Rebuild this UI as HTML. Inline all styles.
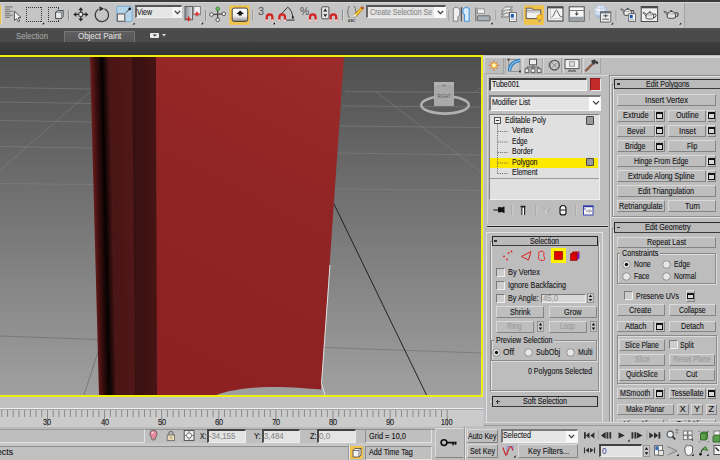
<!DOCTYPE html>
<html><head><meta charset="utf-8"><style>
html,body{margin:0;padding:0;}
body{width:720px;height:460px;overflow:hidden;position:relative;background:#bdbdbd;font-family:"Liberation Sans",sans-serif;}
body>div, .a{position:absolute;box-sizing:border-box;}
.t{position:absolute;white-space:pre;-webkit-text-stroke:0.12px currentColor;}
svg{position:absolute;}
</style></head><body>
<div style="left:0px;top:0px;width:720px;height:2px;background:#3b3b3b"></div>
<div style="left:0px;top:2px;width:720px;height:26px;background:#c5c5c5;border-top:1px solid #d6d6d6"></div>
<div style="left:0px;top:28px;width:720px;height:14px;background:linear-gradient(#555 0px,#4b4b4b 2px,#4a4a4a)"></div>
<div style="left:0px;top:41.5px;width:720px;height:13.5px;background:linear-gradient(#3e3e3e,#393939 60%,#323232)"></div>
<div class="t" style="left:15.50px;top:28.61px;font-size:9.5px;line-height:14px;color:#a6a6a6;transform:scaleX(0.8189);transform-origin:0 0;">Selection</div>
<div style="left:63.5px;top:30.8px;width:71px;height:11.5px;background:linear-gradient(#5f5f5f,#565656);border:1px solid #757575;border-bottom:none;border-radius:1px 1px 0 0"></div>
<div class="t" style="left:77.50px;top:28.61px;font-size:9.5px;line-height:14px;color:#dedede;transform:scaleX(0.8368);transform-origin:0 0;">Object Paint</div>
<div style="left:150px;top:33.3px;width:9.2px;height:5px;background:#ececec;border-radius:1px"></div>
<svg style="left:152px;top:34px" width="6" height="4"><path d="M0.5 0.5L2.8 2.6L5.1 0.5Z" fill="#333"/></svg>
<svg style="left:162px;top:34px" width="4" height="3"><path d="M0 0H4L2 2.5Z" fill="#ddd"/></svg>
<svg style="left:0;top:0" width="483" height="397" viewBox="0 0 483 397"><defs><linearGradient id="vbg" x1="0" y1="57" x2="0" y2="395" gradientUnits="userSpaceOnUse"><stop offset="0" stop-color="#4f4f4f"/><stop offset="1" stop-color="#a0a0a0"/></linearGradient><linearGradient id="dk" x1="90" y1="0" x2="157" y2="0" gradientUnits="userSpaceOnUse"><stop offset="0" stop-color="#5a1a1a"/><stop offset="0.12" stop-color="#2e0a0a"/><stop offset="0.18" stop-color="#0a0202"/><stop offset="0.24" stop-color="#3a1010"/><stop offset="0.35" stop-color="#4a1515"/><stop offset="0.62" stop-color="#4a1414"/><stop offset="0.63" stop-color="#3a0f0f"/><stop offset="0.99" stop-color="#441212"/><stop offset="1" stop-color="#8c2222"/></linearGradient><linearGradient id="rd" x1="170" y1="380" x2="340" y2="60" gradientUnits="userSpaceOnUse"><stop offset="0" stop-color="#8d2121"/><stop offset="0.6" stop-color="#912424"/><stop offset="1" stop-color="#9c2b2b"/></linearGradient></defs><rect x="0" y="57" width="481" height="338" fill="url(#vbg)"/><line x1="0" y1="87.5" x2="92" y2="89" stroke="#a0a0a0" stroke-width="1" opacity="0.32"/><line x1="0" y1="102" x2="92" y2="103.5" stroke="#a0a0a0" stroke-width="1" opacity="0.32"/><line x1="0" y1="120.5" x2="92" y2="122" stroke="#a0a0a0" stroke-width="1" opacity="0.3"/><line x1="0" y1="146.5" x2="94" y2="148" stroke="#a0a0a0" stroke-width="1" opacity="0.28"/><line x1="0" y1="183.5" x2="95" y2="184.5" stroke="#a8a8a8" stroke-width="1" opacity="0.22"/><line x1="345" y1="91.5" x2="481" y2="92.5" stroke="#a0a0a0" stroke-width="1" opacity="0.32"/><line x1="342" y1="106" x2="481" y2="107" stroke="#a0a0a0" stroke-width="1" opacity="0.32"/><line x1="340" y1="126" x2="481" y2="127.5" stroke="#a0a0a0" stroke-width="1" opacity="0.3"/><line x1="338" y1="153" x2="481" y2="155" stroke="#a0a0a0" stroke-width="1" opacity="0.28"/><line x1="336" y1="189" x2="481" y2="190.5" stroke="#a8a8a8" stroke-width="1" opacity="0.22"/><line x1="332" y1="248" x2="481" y2="250" stroke="#8a8a8a" stroke-width="1" opacity="0.3"/><line x1="0" y1="336" x2="98" y2="339.5" stroke="#505050" stroke-width="1" opacity="0.35"/><line x1="324" y1="347.5" x2="481" y2="353" stroke="#505050" stroke-width="1" opacity="0.35"/><line x1="90" y1="92" x2="0" y2="170" stroke="#a0a0a0" stroke-width="1" opacity="0.3"/><line x1="375.5" y1="91.5" x2="481" y2="172" stroke="#a0a0a0" stroke-width="1" opacity="0.3"/><line x1="473" y1="93" x2="481" y2="88" stroke="#a0a0a0" stroke-width="1" opacity="0.3"/><line x1="98" y1="352" x2="84" y2="395" stroke="#505050" stroke-width="1" opacity="0.45"/><line x1="333" y1="202" x2="426.5" y2="395" stroke="#222" stroke-width="1"/><defs><linearGradient id="b1" x1="90" y1="0" x2="102" y2="0" gradientUnits="userSpaceOnUse" gradientTransform="translate(-1.265 0) skewX(1.271)"><stop offset="0" stop-color="#6e1c1c"/><stop offset="0.45" stop-color="#3a0e0e"/><stop offset="1" stop-color="#050101"/></linearGradient><linearGradient id="b2" x1="102" y1="0" x2="109" y2="0" gradientUnits="userSpaceOnUse" gradientTransform="translate(-1.265 0) skewX(1.271)"><stop offset="0" stop-color="#050101"/><stop offset="1" stop-color="#4a1515"/></linearGradient><linearGradient id="b3" x1="109" y1="0" x2="133" y2="0" gradientUnits="userSpaceOnUse" gradientTransform="translate(-1.265 0) skewX(1.271)"><stop offset="0" stop-color="#4a1515"/><stop offset="1" stop-color="#521818"/></linearGradient><linearGradient id="b4" x1="133" y1="0" x2="156.5" y2="0" gradientUnits="userSpaceOnUse"><stop offset="0" stop-color="#381010"/><stop offset="1" stop-color="#471414"/></linearGradient></defs><path d="M90 57 L102.5 57 L110 395 L99 395 Z" fill="url(#b1)"/><path d="M101.5 57 L109.5 57 L117 395 L109.5 395 Z" fill="url(#b2)"/><path d="M109 57 L132.5 57 L135.5 395 L116.5 395 Z" fill="url(#b3)"/><path d="M132 57 L156.5 57 L157.5 395 L135 395 Z" fill="url(#b4)"/><path d="M156 57 L344 57 L321 389.5 C305 388 285 386.5 268 387 C250 387.5 230 390 216.5 395 L157 395 Z" fill="url(#rd)"/><path d="M330 265 L321.5 383.5 L325 395" stroke="#e8e8e8" stroke-width="1" fill="none" opacity="0.9"/><ellipse cx="445" cy="105" rx="23.8" ry="8.6" fill="none" stroke="#b0b0b0" stroke-width="2.6"/><rect x="434" y="82" width="20" height="24" fill="#a9a9a9"/><rect x="434" y="82" width="20" height="4.5" fill="#b2b2b2"/><path d="M436 86H452" stroke="#8a8a9a" stroke-width="0.6"/><path d="M442 84.5L444 86L446 84.5" stroke="#555" stroke-width="0.6" fill="none"/><text x="444" y="98.2" font-size="5.2" text-anchor="middle" fill="#555" font-family="Liberation Sans" textLength="13" lengthAdjust="spacingAndGlyphs">RIGHT</text></svg>
<div style="left:0px;top:55px;width:483px;height:2px;background:#efef12"></div>
<div style="left:481px;top:55px;width:2px;height:342px;background:#efef12"></div>
<div style="left:0px;top:395px;width:483px;height:2px;background:#efef12"></div>
<div style="left:483px;top:55px;width:237px;height:368px;background:#bdbdbd;border-left:1px solid #c4c4d2"></div>
<div style="left:483px;top:56px;width:237px;height:2px;background:#d9d9d9"></div>
<div style="left:484px;top:58px;width:20px;height:16px;background:#bdbdbd;border-left:1px solid #d6d6d6;border-right:1px solid #a0a0a0;border-bottom:1px solid #aaa"></div>
<div style="left:505px;top:58px;width:18px;height:16px;background:#c6c6c6;border-left:1px solid #a8a8a8;border-right:1px solid #d8d8d8"></div>
<div style="left:523px;top:58px;width:19.5px;height:16px;background:#c2c2c2;border-right:1px solid #a6a6a6;border-left:1px solid #d6d6d6;border-bottom:1px solid #b0b0b0"></div>
<div style="left:543px;top:58px;width:19px;height:16px;background:#c2c2c2;border-right:1px solid #a6a6a6;border-left:1px solid #d6d6d6;border-bottom:1px solid #b0b0b0"></div>
<div style="left:562.5px;top:58px;width:19.5px;height:16px;background:#c2c2c2;border-right:1px solid #a6a6a6;border-left:1px solid #d6d6d6;border-bottom:1px solid #b0b0b0"></div>
<div style="left:582.5px;top:58px;width:18.5px;height:16px;background:#c2c2c2;border-right:1px solid #a6a6a6;border-left:1px solid #d6d6d6;border-bottom:1px solid #b0b0b0"></div>
<svg style="left:484px;top:58px" width="20" height="16"><g stroke="#d8602a" stroke-width="0.9" opacity="0.9"><path d="M10 2.2V12.6M4.6 7.4H15.4M6.4 3.8L13.6 11M13.6 3.8L6.4 11"/></g><circle cx="10" cy="7.4" r="3" fill="#f6b030"/><circle cx="10" cy="7.4" r="1.8" fill="#fff8c8"/></svg>
<svg style="left:505px;top:58px" width="18" height="16"><rect x="3.5" y="1.5" width="11.5" height="12" fill="none" stroke="#888" stroke-width="0.8"/><rect x="2.5" y="0.5" width="2" height="2" fill="#444"/><rect x="14" y="12.5" width="2" height="2" fill="#444"/><path d="M4.5 13 Q5 3.5 15 2.5" fill="none" stroke="#2f7fc0" stroke-width="3.6"/><path d="M4.5 13 Q5 3.5 15 2.5" fill="none" stroke="#8fc3ea" stroke-width="1.2"/></svg>
<svg style="left:523px;top:58px" width="20" height="16"><rect x="6.5" y="1.2" width="7" height="5.6" fill="#eee" stroke="#555" stroke-width="1"/><path d="M10 6.8V9M4 9H16M4 9V11M10 9V11M16 9V11" stroke="#555" stroke-width="0.9" fill="none"/><rect x="2" y="10.8" width="3.8" height="3.6" fill="#eee" stroke="#555" stroke-width="0.9"/><rect x="8.1" y="10.8" width="3.8" height="3.6" fill="#eee" stroke="#555" stroke-width="0.9"/><rect x="14.2" y="10.8" width="3.8" height="3.6" fill="#eee" stroke="#555" stroke-width="0.9"/></svg>
<svg style="left:543px;top:58px" width="19" height="16"><circle cx="11.5" cy="7.2" r="4.8" fill="#c8c8c8" stroke="#555" stroke-width="1.4"/><path d="M9 4.7L14 9.7M14 4.7L9 9.7" stroke="#777" stroke-width="0.8"/><path d="M6 4Q4.5 7.2 6 10.4" stroke="#999" stroke-width="0.8" fill="none"/></svg>
<svg style="left:562px;top:58px" width="20" height="16"><rect x="3" y="1.6" width="14" height="9" fill="#f2f2f2" stroke="#555" stroke-width="1"/><rect x="7.5" y="3.8" width="5" height="4.4" fill="#ddd" stroke="#777" stroke-width="0.7"/><path d="M8 11.4V12.6M12 11.4V12.6" stroke="#555"/><path d="M6 13H14" stroke="#555" stroke-width="1.2"/></svg>
<svg style="left:582px;top:58px" width="19" height="16"><path d="M3.2 13.2L12 4.5" stroke="#7a4a3a" stroke-width="2.2"/><path d="M3.2 13.2L12 4.5" stroke="#e0a080" stroke-width="0.8" stroke-dasharray="1 1"/><path d="M9 2.8L12.2 1.5L16.5 4.2L15.5 6.5L13.5 5L11.5 7.2Z" fill="#3a3a3a"/></svg>
<div style="left:609px;top:74.5px;width:111px;height:1px;background:#8e8e8e"></div>
<div style="left:609px;top:75px;width:1px;height:348px;background:#8e8e8e"></div>
<div style="left:610px;top:76px;width:110px;height:1px;background:#e0e0e0"></div>
<div style="left:610px;top:76px;width:1px;height:347px;background:#e0e0e0"></div>
<div style="left:486.5px;top:75.2px;width:1px;height:149px;background:#d6d6d6"></div>
<div style="left:486.5px;top:75.2px;width:121px;height:1px;background:#d6d6d6"></div>
<div style="left:489px;top:78px;width:97.5px;height:12.5px;background:#e3e3e3;border-top:2px solid #3c3c3c;border-left:2px solid #4a4a4a;border-bottom:1px solid #f4f4f4;border-right:1px solid #f0f0f0"></div>
<div class="t" style="left:491.50px;top:76.88px;font-size:9px;line-height:14px;color:#161618;transform:scaleX(0.7814);transform-origin:0 0;">Tube001</div>
<div style="left:589.5px;top:78px;width:11px;height:12.5px;background:#c22a2a;border-top:1px solid #8a1c1c;border-left:1px solid #8a1c1c;border-bottom:1px solid #e8e8e8;border-right:1px solid #e8e8e8"></div>
<div style="left:489px;top:94.5px;width:112px;height:16px;background:#e4e4e4;border-top:2px solid #7a7a7a;border-left:2px solid #7a7a7a;border-bottom:1px solid #f5f5f5;border-right:1px solid #f5f5f5"></div>
<div style="left:589px;top:96.5px;width:11px;height:13.5px;background:#ffffff"></div>
<svg style="left:592px;top:100px" width="8" height="6"><path d="M1 1.2L4 4.2L7 1.2" stroke="#333" stroke-width="1.2" fill="none"/></svg>
<div class="t" style="left:491.50px;top:95.08px;font-size:9px;line-height:14px;color:#161618;transform:scaleX(0.7833);transform-origin:0 0;">Modifier List</div>
<div style="left:489px;top:113.5px;width:111px;height:86px;background:#e0e0e0;border-top:1px solid #808080;border-left:1px solid #808080;border-bottom:1px solid #f0f0f0;border-right:1px solid #f0f0f0"></div>
<div style="left:490px;top:178px;width:109px;height:1px;background:#9a9a9a"></div>
<div style="left:490px;top:179px;width:108px;height:19.5px;background:#e0e0e0"></div>
<div style="left:490px;top:157.6px;width:108.3px;height:10.8px;background:#ffe800"></div>
<svg style="left:490px;top:114px" width="30" height="64"><rect x="4.5" y="3.5" width="6" height="6" fill="#eee" stroke="#444" stroke-width="0.9"/><path d="M5.8 6.5H9.2" stroke="#222" stroke-width="0.9"/><path d="M7.5 10V59.5" stroke="#555" stroke-width="0.8" stroke-dasharray="1.2 1"/><path d="M7.5 17.5H18" stroke="#555" stroke-width="0.8" stroke-dasharray="1.2 1"/><path d="M7.5 28H18" stroke="#555" stroke-width="0.8" stroke-dasharray="1.2 1"/><path d="M7.5 38.5H18" stroke="#555" stroke-width="0.8" stroke-dasharray="1.2 1"/><path d="M7.5 49H18" stroke="#555" stroke-width="0.8" stroke-dasharray="1.2 1"/><path d="M7.5 59.5H18" stroke="#555" stroke-width="0.8" stroke-dasharray="1.2 1"/></svg>
<div class="t" style="left:504.90px;top:112.78px;font-size:9px;line-height:14px;color:#161618;transform:scaleX(0.7805);transform-origin:0 0;">Editable Poly</div>
<div class="t" style="left:511.50px;top:123.08px;font-size:9px;line-height:14px;color:#161618;transform:scaleX(0.8309);transform-origin:0 0;">Vertex</div>
<div class="t" style="left:511.50px;top:133.63px;font-size:9px;line-height:14px;color:#161618;transform:scaleX(0.7375);transform-origin:0 0;">Edge</div>
<div class="t" style="left:511.50px;top:144.18px;font-size:9px;line-height:14px;color:#161618;transform:scaleX(0.7775);transform-origin:0 0;">Border</div>
<div class="t" style="left:511.50px;top:154.73px;font-size:9px;line-height:14px;color:#161618;transform:scaleX(0.7841);transform-origin:0 0;">Polygon</div>
<div class="t" style="left:511.50px;top:165.28px;font-size:9px;line-height:14px;color:#161618;transform:scaleX(0.7724);transform-origin:0 0;">Element</div>
<div style="left:586px;top:116.3px;width:8.3px;height:8.3px;background:#9a9a9a;border:1px solid #444;border-radius:1px"></div>
<div style="left:586px;top:158px;width:8.3px;height:8.3px;background:#9a9a9a;border:1px solid #444;border-radius:1px"></div>
<svg style="left:486px;top:200px" width="121" height="20"><path d="M7.5 10H12" stroke="#111" stroke-width="1"/><path d="M12 7.5L13 7L16.5 7.5L17.5 6.5L18.5 6.5L18.5 13L17.5 13L16.5 12L13 12.5L12 12Z" fill="#111"/><path d="M26 5V15M50 5V15M90 5V15" stroke="#999" stroke-width="1"/><path d="M26.8 5V15M50.8 5V15M90.8 5V15" stroke="#dcdcdc" stroke-width="0.8"/><path d="M34.5 6.5H39.5M36 6.5V15M38.5 6.5V15" stroke="#222" stroke-width="1.3"/><rect x="36.6" y="8" width="1.4" height="7" fill="#fff"/><path d="M57 7L61 14L65 7" stroke="#aaa" stroke-width="1" fill="none"/><path d="M59 10L61 14" stroke="#eee" stroke-width="0.8"/><path d="M74 8.5Q74 5.5 77 5.5Q80 5.5 80 8.5V13Q80 15 77 15Q74 15 74 13Z" fill="#eee" stroke="#111" stroke-width="1.1"/><path d="M74 10H80" stroke="#111" stroke-width="0.9"/><rect x="97.5" y="6" width="9.5" height="9" fill="#f4f4f4" stroke="#2a3aa8" stroke-width="0.9"/><rect x="97" y="5.6" width="10.5" height="1.6" fill="#2a3aa8"/><path d="M100 11H102.5M104 11H106M103.2 9.5V12.5" stroke="#556" stroke-width="0.7"/><path d="M97.5 9H100" stroke="#2a3aa8" stroke-width="0.7"/></svg>
<div style="left:487px;top:225.6px;width:121px;height:1.6px;background:#1e1e1e;border-radius:1px;box-shadow:0 -1px 0 #d8d8d8, 0 1px 0 #d4d4d4"></div>
<div style="left:485.5px;top:232px;width:117.5px;height:190px;border-top:1px solid #e2e2e2;border-left:1px solid #e2e2e2;border-right:1px solid #e2e2e2"></div>
<div style="left:489.5px;top:240.5px;width:110.5px;height:151px;border-top:1px solid #8e8e8e;border-left:1px solid #8e8e8e;border-right:1px solid #e6e6e6;border-bottom:1px solid #e6e6e6;box-shadow:inset -1px -1px 0 #8e8e8e, inset 1px 1px 0 #e6e6e6"></div>
<div style="left:491.5px;top:235.5px;width:106.5px;height:10.5px;background:#bababa;border:1px solid #2a2a2a;border-bottom-color:#3a3a3a"></div>
<div class="t" style="left:530.25px;top:233.63px;font-size:9px;line-height:14px;color:#161618;transform:scaleX(0.7833);transform-origin:0 0;">Selection</div>
<div style="left:494.1px;top:240.45px;width:3px;height:1.1px;background:#333"></div>
<svg style="left:500px;top:247px" width="80" height="17"><circle cx="4" cy="9.5" r="0.9" fill="#e02020"/><circle cx="8.5" cy="6" r="0.9" fill="#e02020"/><circle cx="7" cy="12.5" r="0.9" fill="#e02020"/><circle cx="11.5" cy="4.5" r="0.9" fill="#e02020"/><path d="M21.5 9.5L31 4.5L28.5 13Z" fill="none" stroke="#e02020" stroke-width="1"/><path d="M40 4.5Q44 3 44 7Q43 8.5 44.5 10.5Q45.5 13.5 42 13.5Q38 13.5 38.5 9.5Q39.5 8 38.5 6.5Q38 5 40 4.5Z" fill="none" stroke="#e02020" stroke-width="0.9"/><rect x="51" y="1" width="15" height="15" fill="#fff200"/><rect x="54.5" y="4.5" width="8" height="8" fill="#e00000" stroke="#700" stroke-width="0.6"/><path d="M70.5 7L73 4.5H79.5L77 7Z" fill="#c00"/><rect x="70.5" y="7" width="6.5" height="6.5" fill="#e00000" stroke="#600" stroke-width="0.5"/><path d="M77 7L79.5 4.5V11L77 13.5Z" fill="#7a1a9a"/></svg>
<div style="left:496px;top:268px;width:9px;height:9px;background:#cdcdcd;border-top:1px solid #7a7a7a;border-left:1px solid #7a7a7a;border-bottom:1px solid #eee;border-right:1px solid #eee"></div>
<div class="t" style="left:508.00px;top:265.18px;font-size:9px;line-height:14px;color:#161618;transform:scaleX(0.8308);transform-origin:0 0;">By Vertex</div>
<div style="left:496px;top:281px;width:9px;height:9px;background:#cdcdcd;border-top:1px solid #7a7a7a;border-left:1px solid #7a7a7a;border-bottom:1px solid #eee;border-right:1px solid #eee"></div>
<div class="t" style="left:508.00px;top:278.18px;font-size:9px;line-height:14px;color:#161618;transform:scaleX(0.8051);transform-origin:0 0;">Ignore Backfacing</div>
<div style="left:496px;top:294px;width:9px;height:9px;background:#cdcdcd;border-top:1px solid #7a7a7a;border-left:1px solid #7a7a7a;border-bottom:1px solid #eee;border-right:1px solid #eee"></div>
<div class="t" style="left:508.00px;top:291.38px;font-size:9px;line-height:14px;color:#161618;transform:scaleX(0.8021);transform-origin:0 0;">By Angle:</div>
<div style="left:541px;top:293.5px;width:45px;height:9px;background:#d8d8d8;border-top:1px solid #7a7a7a;border-left:1px solid #7a7a7a;border-bottom:1px solid #eee;border-right:1px solid #eee"></div>
<div class="t" style="left:543.00px;top:291.18px;font-size:9px;line-height:14px;color:#9a9a9a;transform:scaleX(0.8564);transform-origin:0 0;">45,0</div>
<svg style="left:587px;top:293px" width="7" height="10"><rect x="0.5" y="0.5" width="6" height="9" fill="#c8c8c8" stroke="#8a8a8a" stroke-width="0.8"/><path d="M1.8 4.0L3.5 1.8L5.2 4.0Z M1.8 6.0L3.5 8.2L5.2 6.0Z" fill="#111"/></svg>
<div style="left:496px;top:306px;width:48px;height:12px;background:#bebebe;border-top:1px solid #dadada;border-left:1px solid #dadada;border-bottom:1px solid #848484;border-right:1px solid #848484;border-radius:1px"></div>
<div class="t" style="left:509.80px;top:304.88px;font-size:9px;line-height:14px;color:#161618;transform:scaleX(0.7997);transform-origin:0 0;">Shrink</div>
<div style="left:548.5px;top:306px;width:48px;height:12px;background:#bebebe;border-top:1px solid #dadada;border-left:1px solid #dadada;border-bottom:1px solid #848484;border-right:1px solid #848484;border-radius:1px"></div>
<div class="t" style="left:563.70px;top:304.88px;font-size:9px;line-height:14px;color:#161618;transform:scaleX(0.8185);transform-origin:0 0;">Grow</div>
<div style="left:496px;top:320.5px;width:37.5px;height:12px;background:#bebebe;border-top:1px solid #dadada;border-left:1px solid #dadada;border-bottom:1px solid #848484;border-right:1px solid #848484;border-radius:1px"></div>
<div class="t" style="left:507.45px;top:319.38px;font-size:9px;line-height:14px;color:#9a9a9a;transform:scaleX(0.7888);transform-origin:0 0;">Ring</div>
<svg style="left:537px;top:321px" width="7" height="11"><rect x="0.5" y="0.5" width="6" height="10" fill="#c8c8c8" stroke="#8a8a8a" stroke-width="0.8"/><path d="M1.8 4.5L3.5 1.8L5.2 4.5Z M1.8 6.5L3.5 9.2L5.2 6.5Z" fill="#111"/></svg>
<div style="left:548.5px;top:320.5px;width:38.5px;height:12px;background:#bebebe;border-top:1px solid #dadada;border-left:1px solid #dadada;border-bottom:1px solid #848484;border-right:1px solid #848484;border-radius:1px"></div>
<div class="t" style="left:560.40px;top:319.38px;font-size:9px;line-height:14px;color:#9a9a9a;transform:scaleX(0.7343);transform-origin:0 0;">Loop</div>
<svg style="left:589.5px;top:321px" width="7" height="11"><rect x="0.5" y="0.5" width="6" height="10" fill="#c8c8c8" stroke="#8a8a8a" stroke-width="0.8"/><path d="M1.8 4.5L3.5 1.8L5.2 4.5Z M1.8 6.5L3.5 9.2L5.2 6.5Z" fill="#111"/></svg>
<div style="left:491px;top:340px;width:106px;height:21px;border:1px solid #8a8a8a;box-shadow:1px 1px 0 #dcdcdc, inset 1px 1px 0 #dcdcdc"></div>
<div style="left:493.7px;top:339px;width:60.4px;height:3px;background:#bdbdbd"></div>
<div class="t" style="left:495.70px;top:332.88px;font-size:9px;line-height:14px;color:#161618;transform:scaleX(0.7885);transform-origin:0 0;">Preview Selection</div>
<svg style="left:492.0px;top:347.5px" width="9" height="9"><circle cx="4.5" cy="4.5" r="3.8" fill="#e6e6e6" stroke="#8a8a8a" stroke-width="0.9"/><circle cx="4.5" cy="4.5" r="1.7" fill="#111"/></svg>
<div class="t" style="left:503.00px;top:344.88px;font-size:9px;line-height:14px;color:#161618;transform:scaleX(0.9292);transform-origin:0 0;">Off</div>
<svg style="left:524.0px;top:347.5px" width="9" height="9"><circle cx="4.5" cy="4.5" r="3.8" fill="#e6e6e6" stroke="#8a8a8a" stroke-width="0.9"/></svg>
<div class="t" style="left:536.00px;top:344.88px;font-size:9px;line-height:14px;color:#161618;transform:scaleX(0.7995);transform-origin:0 0;">SubObj</div>
<svg style="left:566.0px;top:347.5px" width="9" height="9"><circle cx="4.5" cy="4.5" r="3.8" fill="#e6e6e6" stroke="#8a8a8a" stroke-width="0.9"/></svg>
<div class="t" style="left:578.00px;top:344.88px;font-size:9px;line-height:14px;color:#161618;transform:scaleX(0.7684);transform-origin:0 0;">Multi</div>
<div class="t" style="left:527.80px;top:363.68px;font-size:9px;line-height:14px;color:#161618;transform:scaleX(0.7824);transform-origin:0 0;">0 Polygons Selected</div>
<div style="left:491.5px;top:396.3px;width:106.5px;height:10.5px;background:#bababa;border:1px solid #2a2a2a;border-bottom-color:#3a3a3a"></div>
<div class="t" style="left:522.75px;top:394.43px;font-size:9px;line-height:14px;color:#161618;transform:scaleX(0.7923);transform-origin:0 0;">Soft Selection</div>
<div style="left:495.5px;top:401.05px;width:4px;height:1px;background:#333"></div>
<div style="left:497.0px;top:399.55px;width:1px;height:4px;background:#333"></div>
<div style="left:489.5px;top:400.5px;width:2px;height:1px;background:#e6e6e6"></div>
<div style="left:611.5px;top:84px;width:110px;height:132.5px;border-top:1px solid #8e8e8e;border-left:1px solid #8e8e8e;border-bottom:1px solid #8e8e8e;box-shadow:inset 1px 1px 0 #e4e4e4, 0 1px 0 #e4e4e4"></div>
<div style="left:614px;top:78.5px;width:107px;height:10.5px;background:#bababa;border:1px solid #2a2a2a;border-bottom-color:#3a3a3a"></div>
<div class="t" style="left:645.80px;top:76.63px;font-size:9px;line-height:14px;color:#161618;transform:scaleX(0.7886);transform-origin:0 0;">Edit Polygons</div>
<div style="left:616.6px;top:83.45px;width:3px;height:1.1px;background:#333"></div>
<div style="left:616.5px;top:94.4px;width:99.5px;height:12px;background:#bebebe;border-top:1px solid #dadada;border-left:1px solid #dadada;border-bottom:1px solid #848484;border-right:1px solid #848484;border-radius:1px"></div>
<div class="t" style="left:644.75px;top:93.28px;font-size:9px;line-height:14px;color:#161618;transform:scaleX(0.8511);transform-origin:0 0;">Insert Vertex</div>
<div style="left:616.5px;top:109.54px;width:38px;height:12px;background:#bebebe;border-top:1px solid #dadada;border-left:1px solid #dadada;border-bottom:1px solid #848484;border-right:1px solid #848484;border-radius:1px"></div>
<div class="t" style="left:622.70px;top:108.42px;font-size:9px;line-height:14px;color:#161618;transform:scaleX(0.8254);transform-origin:0 0;">Extrude</div>
<div style="left:655px;top:109.54px;width:9.5px;height:12px;background:#bebebe;border-top:1px solid #dadada;border-left:1px solid #dadada;border-bottom:1px solid #848484;border-right:1px solid #848484"></div>
<div style="left:656.2px;top:112.34px;width:6.9px;height:7px;background:#d8d8d8;border:1px solid #111;border-top-width:2px"></div>
<div style="left:668px;top:109.54px;width:38px;height:12px;background:#bebebe;border-top:1px solid #dadada;border-left:1px solid #dadada;border-bottom:1px solid #848484;border-right:1px solid #848484;border-radius:1px"></div>
<div class="t" style="left:675.60px;top:108.42px;font-size:9px;line-height:14px;color:#161618;transform:scaleX(0.7996);transform-origin:0 0;">Outline</div>
<div style="left:706.5px;top:109.54px;width:9.5px;height:12px;background:#bebebe;border-top:1px solid #dadada;border-left:1px solid #dadada;border-bottom:1px solid #848484;border-right:1px solid #848484"></div>
<div style="left:707.7px;top:112.34px;width:6.9px;height:7px;background:#d8d8d8;border:1px solid #111;border-top-width:2px"></div>
<div style="left:616.5px;top:124.68px;width:38px;height:12px;background:#bebebe;border-top:1px solid #dadada;border-left:1px solid #dadada;border-bottom:1px solid #848484;border-right:1px solid #848484;border-radius:1px"></div>
<div class="t" style="left:626.50px;top:123.56px;font-size:9px;line-height:14px;color:#161618;transform:scaleX(0.7996);transform-origin:0 0;">Bevel</div>
<div style="left:655px;top:124.68px;width:9.5px;height:12px;background:#bebebe;border-top:1px solid #dadada;border-left:1px solid #dadada;border-bottom:1px solid #848484;border-right:1px solid #848484"></div>
<div style="left:656.2px;top:127.48px;width:6.9px;height:7px;background:#d8d8d8;border:1px solid #111;border-top-width:2px"></div>
<div style="left:668px;top:124.68px;width:38px;height:12px;background:#bebebe;border-top:1px solid #dadada;border-left:1px solid #dadada;border-bottom:1px solid #848484;border-right:1px solid #848484;border-radius:1px"></div>
<div class="t" style="left:678.60px;top:123.56px;font-size:9px;line-height:14px;color:#161618;transform:scaleX(0.8611);transform-origin:0 0;">Inset</div>
<div style="left:706.5px;top:124.68px;width:9.5px;height:12px;background:#bebebe;border-top:1px solid #dadada;border-left:1px solid #dadada;border-bottom:1px solid #848484;border-right:1px solid #848484"></div>
<div style="left:707.7px;top:127.48px;width:6.9px;height:7px;background:#d8d8d8;border:1px solid #111;border-top-width:2px"></div>
<div style="left:616.5px;top:139.82px;width:38px;height:12px;background:#bebebe;border-top:1px solid #dadada;border-left:1px solid #dadada;border-bottom:1px solid #848484;border-right:1px solid #848484;border-radius:1px"></div>
<div class="t" style="left:625.25px;top:138.70px;font-size:9px;line-height:14px;color:#161618;transform:scaleX(0.7880);transform-origin:0 0;">Bridge</div>
<div style="left:655px;top:139.82px;width:9.5px;height:12px;background:#bebebe;border-top:1px solid #dadada;border-left:1px solid #dadada;border-bottom:1px solid #848484;border-right:1px solid #848484"></div>
<div style="left:656.2px;top:142.62px;width:6.9px;height:7px;background:#d8d8d8;border:1px solid #111;border-top-width:2px"></div>
<div style="left:668px;top:139.82px;width:48px;height:12px;background:#bebebe;border-top:1px solid #dadada;border-left:1px solid #dadada;border-bottom:1px solid #848484;border-right:1px solid #848484;border-radius:1px"></div>
<div class="t" style="left:686.85px;top:138.70px;font-size:9px;line-height:14px;color:#161618;transform:scaleX(0.7103);transform-origin:0 0;">Flip</div>
<div style="left:616.5px;top:154.96px;width:89.5px;height:12px;background:#bebebe;border-top:1px solid #dadada;border-left:1px solid #dadada;border-bottom:1px solid #848484;border-right:1px solid #848484;border-radius:1px"></div>
<div class="t" style="left:634.05px;top:153.84px;font-size:9px;line-height:14px;color:#161618;transform:scaleX(0.7713);transform-origin:0 0;">Hinge From Edge</div>
<div style="left:706.5px;top:154.96px;width:9.5px;height:12px;background:#bebebe;border-top:1px solid #dadada;border-left:1px solid #dadada;border-bottom:1px solid #848484;border-right:1px solid #848484"></div>
<div style="left:707.7px;top:157.76000000000002px;width:6.9px;height:7px;background:#d8d8d8;border:1px solid #111;border-top-width:2px"></div>
<div style="left:616.5px;top:170.10000000000002px;width:89.5px;height:12px;background:#bebebe;border-top:1px solid #dadada;border-left:1px solid #dadada;border-bottom:1px solid #848484;border-right:1px solid #848484;border-radius:1px"></div>
<div class="t" style="left:628.00px;top:168.98px;font-size:9px;line-height:14px;color:#161618;transform:scaleX(0.7959);transform-origin:0 0;">Extrude Along Spline</div>
<div style="left:706.5px;top:170.10000000000002px;width:9.5px;height:12px;background:#bebebe;border-top:1px solid #dadada;border-left:1px solid #dadada;border-bottom:1px solid #848484;border-right:1px solid #848484"></div>
<div style="left:707.7px;top:172.90000000000003px;width:6.9px;height:7px;background:#d8d8d8;border:1px solid #111;border-top-width:2px"></div>
<div style="left:616.5px;top:185.24px;width:99.5px;height:12px;background:#bebebe;border-top:1px solid #dadada;border-left:1px solid #dadada;border-bottom:1px solid #848484;border-right:1px solid #848484;border-radius:1px"></div>
<div class="t" style="left:638.25px;top:184.12px;font-size:9px;line-height:14px;color:#161618;transform:scaleX(0.8053);transform-origin:0 0;">Edit Triangulation</div>
<div style="left:616.5px;top:200.38px;width:48px;height:12px;background:#bebebe;border-top:1px solid #dadada;border-left:1px solid #dadada;border-bottom:1px solid #848484;border-right:1px solid #848484;border-radius:1px"></div>
<div class="t" style="left:618.70px;top:199.26px;font-size:9px;line-height:14px;color:#161618;transform:scaleX(0.8145);transform-origin:0 0;">Retriangulate</div>
<div style="left:668px;top:200.38px;width:48px;height:12px;background:#bebebe;border-top:1px solid #dadada;border-left:1px solid #dadada;border-bottom:1px solid #848484;border-right:1px solid #848484;border-radius:1px"></div>
<div class="t" style="left:684.50px;top:199.26px;font-size:9px;line-height:14px;color:#161618;transform:scaleX(0.8255);transform-origin:0 0;">Turn</div>
<div style="left:611.5px;top:227.5px;width:110px;height:200px;border-top:1px solid #8e8e8e;border-left:1px solid #8e8e8e;border-bottom:1px solid #8e8e8e;box-shadow:inset 1px 1px 0 #e4e4e4, 0 1px 0 #e4e4e4"></div>
<div style="left:614px;top:222.2px;width:107px;height:10.5px;background:#bababa;border:1px solid #2a2a2a;border-bottom-color:#3a3a3a"></div>
<div class="t" style="left:644.70px;top:220.33px;font-size:9px;line-height:14px;color:#161618;transform:scaleX(0.7928);transform-origin:0 0;">Edit Geometry</div>
<div style="left:616.6px;top:227.14999999999998px;width:3px;height:1.1px;background:#333"></div>
<div style="left:616.5px;top:236.8px;width:99.5px;height:11.5px;background:#bebebe;border-top:1px solid #dadada;border-left:1px solid #dadada;border-bottom:1px solid #848484;border-right:1px solid #848484;border-radius:1px"></div>
<div class="t" style="left:646.75px;top:235.43px;font-size:9px;line-height:14px;color:#161618;transform:scaleX(0.8036);transform-origin:0 0;">Repeat Last</div>
<div style="left:616.6px;top:253px;width:99px;height:31px;border:1px solid #8a8a8a;box-shadow:1px 1px 0 #dcdcdc, inset 1px 1px 0 #dcdcdc"></div>
<div style="left:620px;top:252px;width:40.3px;height:3px;background:#bdbdbd"></div>
<div class="t" style="left:622.00px;top:245.88px;font-size:9px;line-height:14px;color:#161618;transform:scaleX(0.7975);transform-origin:0 0;">Constraints</div>
<svg style="left:622.0px;top:259.8px" width="9" height="9"><circle cx="4.5" cy="4.5" r="3.8" fill="#e6e6e6" stroke="#8a8a8a" stroke-width="0.9"/><circle cx="4.5" cy="4.5" r="1.7" fill="#111"/></svg>
<div class="t" style="left:633.70px;top:257.18px;font-size:9px;line-height:14px;color:#161618;transform:scaleX(0.7716);transform-origin:0 0;">None</div>
<svg style="left:662.0px;top:259.8px" width="9" height="9"><circle cx="4.5" cy="4.5" r="3.8" fill="#e6e6e6" stroke="#8a8a8a" stroke-width="0.9"/></svg>
<div class="t" style="left:674.00px;top:257.18px;font-size:9px;line-height:14px;color:#161618;transform:scaleX(0.7613);transform-origin:0 0;">Edge</div>
<svg style="left:622.0px;top:272.0px" width="9" height="9"><circle cx="4.5" cy="4.5" r="3.8" fill="#e6e6e6" stroke="#8a8a8a" stroke-width="0.9"/></svg>
<div class="t" style="left:633.70px;top:269.38px;font-size:9px;line-height:14px;color:#161618;transform:scaleX(0.7647);transform-origin:0 0;">Face</div>
<svg style="left:662.0px;top:272.0px" width="9" height="9"><circle cx="4.5" cy="4.5" r="3.8" fill="#e6e6e6" stroke="#8a8a8a" stroke-width="0.9"/></svg>
<div class="t" style="left:674.00px;top:269.38px;font-size:9px;line-height:14px;color:#161618;transform:scaleX(0.7586);transform-origin:0 0;">Normal</div>
<div style="left:624px;top:291px;width:9px;height:9px;background:#cdcdcd;border-top:1px solid #7a7a7a;border-left:1px solid #7a7a7a;border-bottom:1px solid #eee;border-right:1px solid #eee"></div>
<div class="t" style="left:635.60px;top:288.88px;font-size:9px;line-height:14px;color:#161618;transform:scaleX(0.7746);transform-origin:0 0;">Preserve UVs</div>
<div style="left:685.5px;top:290px;width:9.5px;height:11.5px;background:#bebebe;border-top:1px solid #dadada;border-left:1px solid #dadada;border-bottom:1px solid #848484;border-right:1px solid #848484"></div>
<div style="left:686.7px;top:292.8px;width:6.9px;height:6.5px;background:#d8d8d8;border:1px solid #111;border-top-width:2px"></div>
<div style="left:616.6px;top:304.4px;width:48px;height:12px;background:#bebebe;border-top:1px solid #dadada;border-left:1px solid #dadada;border-bottom:1px solid #848484;border-right:1px solid #848484;border-radius:1px"></div>
<div class="t" style="left:629.45px;top:303.28px;font-size:9px;line-height:14px;color:#161618;transform:scaleX(0.8256);transform-origin:0 0;">Create</div>
<div style="left:668.5px;top:304.4px;width:47.5px;height:12px;background:#bebebe;border-top:1px solid #dadada;border-left:1px solid #dadada;border-bottom:1px solid #848484;border-right:1px solid #848484;border-radius:1px"></div>
<div class="t" style="left:678.95px;top:303.28px;font-size:9px;line-height:14px;color:#161618;transform:scaleX(0.7596);transform-origin:0 0;">Collapse</div>
<div style="left:616.6px;top:320.6px;width:37.5px;height:11.5px;background:#bebebe;border-top:1px solid #dadada;border-left:1px solid #dadada;border-bottom:1px solid #848484;border-right:1px solid #848484;border-radius:1px"></div>
<div class="t" style="left:624.60px;top:319.23px;font-size:9px;line-height:14px;color:#161618;transform:scaleX(0.8427);transform-origin:0 0;">Attach</div>
<div style="left:655px;top:320.6px;width:9.5px;height:11.5px;background:#bebebe;border-top:1px solid #dadada;border-left:1px solid #dadada;border-bottom:1px solid #848484;border-right:1px solid #848484"></div>
<div style="left:656.2px;top:323.40000000000003px;width:6.9px;height:6.5px;background:#d8d8d8;border:1px solid #111;border-top-width:2px"></div>
<div style="left:668.5px;top:320.6px;width:47.5px;height:11.5px;background:#bebebe;border-top:1px solid #dadada;border-left:1px solid #dadada;border-bottom:1px solid #848484;border-right:1px solid #848484;border-radius:1px"></div>
<div class="t" style="left:680.90px;top:319.23px;font-size:9px;line-height:14px;color:#161618;transform:scaleX(0.7961);transform-origin:0 0;">Detach</div>
<div style="left:616.6px;top:335px;width:100.5px;height:48.5px;border:1px solid #8a8a8a;box-shadow:1px 1px 0 #dcdcdc, inset 1px 1px 0 #dcdcdc"></div>
<div style="left:619px;top:339px;width:46px;height:12px;background:#bebebe;border-top:1px solid #dadada;border-left:1px solid #dadada;border-bottom:1px solid #848484;border-right:1px solid #848484;border-radius:1px"></div>
<div class="t" style="left:625.10px;top:337.88px;font-size:9px;line-height:14px;color:#161618;transform:scaleX(0.7507);transform-origin:0 0;">Slice Plane</div>
<div style="left:668.5px;top:340px;width:9px;height:9px;background:#cdcdcd;border-top:1px solid #7a7a7a;border-left:1px solid #7a7a7a;border-bottom:1px solid #eee;border-right:1px solid #eee"></div>
<div class="t" style="left:679.80px;top:337.68px;font-size:9px;line-height:14px;color:#161618;transform:scaleX(0.7825);transform-origin:0 0;">Split</div>
<div style="left:619px;top:353.5px;width:46px;height:12px;background:#bebebe;border-top:1px solid #dadada;border-left:1px solid #dadada;border-bottom:1px solid #848484;border-right:1px solid #848484;border-radius:1px"></div>
<div class="t" style="left:634.60px;top:352.38px;font-size:9px;line-height:14px;color:#9a9a9a;transform:scaleX(0.7587);transform-origin:0 0;">Slice</div>
<div style="left:668.5px;top:353.5px;width:46px;height:12px;background:#bebebe;border-top:1px solid #dadada;border-left:1px solid #dadada;border-bottom:1px solid #848484;border-right:1px solid #848484;border-radius:1px"></div>
<div class="t" style="left:672.50px;top:352.38px;font-size:9px;line-height:14px;color:#9a9a9a;transform:scaleX(0.7751);transform-origin:0 0;">Reset Plane</div>
<div style="left:619px;top:368.6px;width:46px;height:12px;background:#bebebe;border-top:1px solid #dadada;border-left:1px solid #dadada;border-bottom:1px solid #848484;border-right:1px solid #848484;border-radius:1px"></div>
<div class="t" style="left:626.15px;top:367.48px;font-size:9px;line-height:14px;color:#161618;transform:scaleX(0.7457);transform-origin:0 0;">QuickSlice</div>
<div style="left:668.5px;top:368.6px;width:46px;height:12px;background:#bebebe;border-top:1px solid #dadada;border-left:1px solid #dadada;border-bottom:1px solid #848484;border-right:1px solid #848484;border-radius:1px"></div>
<div class="t" style="left:685.90px;top:367.48px;font-size:9px;line-height:14px;color:#161618;transform:scaleX(0.7997);transform-origin:0 0;">Cut</div>
<div style="left:616.6px;top:387.6px;width:37.5px;height:11.5px;background:#bebebe;border-top:1px solid #dadada;border-left:1px solid #dadada;border-bottom:1px solid #848484;border-right:1px solid #848484;border-radius:1px"></div>
<div class="t" style="left:620.20px;top:386.23px;font-size:9px;line-height:14px;color:#161618;transform:scaleX(0.7868);transform-origin:0 0;">MSmooth</div>
<div style="left:655px;top:387.6px;width:9.5px;height:11.5px;background:#bebebe;border-top:1px solid #dadada;border-left:1px solid #dadada;border-bottom:1px solid #848484;border-right:1px solid #848484"></div>
<div style="left:656.2px;top:390.40000000000003px;width:6.9px;height:6.5px;background:#d8d8d8;border:1px solid #111;border-top-width:2px"></div>
<div style="left:668.5px;top:387.6px;width:37.5px;height:11.5px;background:#bebebe;border-top:1px solid #dadada;border-left:1px solid #dadada;border-bottom:1px solid #848484;border-right:1px solid #848484;border-radius:1px"></div>
<div class="t" style="left:670.95px;top:386.23px;font-size:9px;line-height:14px;color:#161618;transform:scaleX(0.8146);transform-origin:0 0;">Tessellate</div>
<div style="left:706.5px;top:387.6px;width:9.5px;height:11.5px;background:#bebebe;border-top:1px solid #dadada;border-left:1px solid #dadada;border-bottom:1px solid #848484;border-right:1px solid #848484"></div>
<div style="left:707.7px;top:390.40000000000003px;width:6.9px;height:6.5px;background:#d8d8d8;border:1px solid #111;border-top-width:2px"></div>
<div style="left:616.5px;top:403.5px;width:57.5px;height:11.5px;background:#bebebe;border-top:1px solid #dadada;border-left:1px solid #dadada;border-bottom:1px solid #848484;border-right:1px solid #848484;border-radius:1px"></div>
<div class="t" style="left:626.10px;top:402.13px;font-size:9px;line-height:14px;color:#161618;transform:scaleX(0.7581);transform-origin:0 0;">Make Planar</div>
<div style="left:677px;top:403.5px;width:11.5px;height:11.5px;background:#bebebe;border-top:1px solid #dadada;border-left:1px solid #dadada;border-bottom:1px solid #848484;border-right:1px solid #848484;border-radius:1px"></div>
<div class="t" style="left:679.75px;top:402.13px;font-size:9px;line-height:14px;color:#161618;">X</div>
<div style="left:691.3px;top:403.5px;width:11.5px;height:11.5px;background:#bebebe;border-top:1px solid #dadada;border-left:1px solid #dadada;border-bottom:1px solid #848484;border-right:1px solid #848484;border-radius:1px"></div>
<div class="t" style="left:694.05px;top:402.13px;font-size:9px;line-height:14px;color:#161618;">Y</div>
<div style="left:705.7px;top:403.5px;width:11px;height:11.5px;background:#bebebe;border-top:1px solid #dadada;border-left:1px solid #dadada;border-bottom:1px solid #848484;border-right:1px solid #848484;border-radius:1px"></div>
<div class="t" style="left:708.45px;top:402.13px;font-size:9px;line-height:14px;color:#161618;">Z</div>
<div style="left:616.5px;top:418.5px;width:47.5px;height:11.5px;background:#bebebe;border-top:1px solid #dadada;border-left:1px solid #dadada;border-bottom:1px solid #848484;border-right:1px solid #848484;border-radius:1px"></div>
<div class="t" style="left:624.25px;top:417.13px;font-size:9px;line-height:14px;color:#161618;transform:scaleX(0.7737);transform-origin:0 0;">View Align</div>
<div style="left:668.5px;top:418.5px;width:47.5px;height:11.5px;background:#bebebe;border-top:1px solid #dadada;border-left:1px solid #dadada;border-bottom:1px solid #848484;border-right:1px solid #848484;border-radius:1px"></div>
<div class="t" style="left:676.25px;top:417.13px;font-size:9px;line-height:14px;color:#161618;transform:scaleX(0.8201);transform-origin:0 0;">Grid Align</div>
<svg style="left:0;top:0" width="720" height="28" viewBox="0 0 720 28"><rect x="0" y="5.3" width="1.4" height="19" fill="#e8c050"/><rect x="1.4" y="5.3" width="0.8" height="19" fill="#e4e4e4"/><rect x="5" y="6.2" width="7.800000000000001" height="1.4" fill="#8a8a8a"/><rect x="5" y="8.5" width="5" height="1.4" fill="#8a8a8a"/><rect x="5" y="10.55" width="7.800000000000001" height="1.4" fill="#8a8a8a"/><rect x="5" y="12.55" width="5" height="1.4" fill="#8a8a8a"/><rect x="5" y="14.55" width="7.800000000000001" height="1.4" fill="#8a8a8a"/><rect x="5" y="16.6" width="5" height="1.4" fill="#8a8a8a"/><path d="M14.4 11.2L14.4 20.5L16.6 18.6L18.4 21.8L19.8 21L18.2 17.8L21 17.4Z" fill="#f4f4f4" stroke="#444" stroke-width="0.9" stroke-linejoin="round"/><rect x="26" y="7" width="1" height="1" fill="#333"/><rect x="26" y="21" width="1" height="1" fill="#333"/><rect x="28" y="7" width="1" height="1" fill="#333"/><rect x="28" y="21" width="1" height="1" fill="#333"/><rect x="30" y="7" width="1" height="1" fill="#333"/><rect x="30" y="21" width="1" height="1" fill="#333"/><rect x="32" y="7" width="1" height="1" fill="#333"/><rect x="32" y="21" width="1" height="1" fill="#333"/><rect x="34" y="7" width="1" height="1" fill="#333"/><rect x="34" y="21" width="1" height="1" fill="#333"/><rect x="36" y="7" width="1" height="1" fill="#333"/><rect x="36" y="21" width="1" height="1" fill="#333"/><rect x="38" y="7" width="1" height="1" fill="#333"/><rect x="38" y="21" width="1" height="1" fill="#333"/><rect x="40" y="7" width="1" height="1" fill="#333"/><rect x="40" y="21" width="1" height="1" fill="#333"/><rect x="26" y="9" width="1" height="1" fill="#333"/><rect x="41" y="9" width="1" height="1" fill="#333"/><rect x="26" y="11" width="1" height="1" fill="#333"/><rect x="41" y="11" width="1" height="1" fill="#333"/><rect x="26" y="13" width="1" height="1" fill="#333"/><rect x="41" y="13" width="1" height="1" fill="#333"/><rect x="26" y="15" width="1" height="1" fill="#333"/><rect x="41" y="15" width="1" height="1" fill="#333"/><rect x="26" y="17" width="1" height="1" fill="#333"/><rect x="41" y="17" width="1" height="1" fill="#333"/><rect x="26" y="19" width="1" height="1" fill="#333"/><rect x="41" y="19" width="1" height="1" fill="#333"/><rect x="41" y="7" width="1" height="1" fill="#333"/><rect x="41" y="21" width="1" height="1" fill="#333"/><path d="M42 24.2L44.2 22.2L44.2 24.2Z" fill="#111"/><rect x="41" y="22.2" width="1" height="1" fill="#fff" opacity="0.7"/><rect x="48" y="7" width="1" height="1" fill="#333"/><rect x="48" y="21" width="1" height="1" fill="#333"/><rect x="50" y="7" width="1" height="1" fill="#333"/><rect x="50" y="21" width="1" height="1" fill="#333"/><rect x="52" y="7" width="1" height="1" fill="#333"/><rect x="52" y="21" width="1" height="1" fill="#333"/><rect x="54" y="7" width="1" height="1" fill="#333"/><rect x="54" y="21" width="1" height="1" fill="#333"/><rect x="56" y="7" width="1" height="1" fill="#333"/><rect x="56" y="21" width="1" height="1" fill="#333"/><rect x="58" y="7" width="1" height="1" fill="#333"/><rect x="58" y="21" width="1" height="1" fill="#333"/><rect x="48" y="9" width="1" height="1" fill="#333"/><rect x="48" y="11" width="1" height="1" fill="#333"/><rect x="48" y="13" width="1" height="1" fill="#333"/><rect x="48" y="15" width="1" height="1" fill="#333"/><rect x="48" y="17" width="1" height="1" fill="#333"/><rect x="48" y="19" width="1" height="1" fill="#333"/><rect x="58" y="8" width="1" height="1" fill="#333"/><rect x="58" y="20" width="1" height="1" fill="#333"/><path d="M55.6 12.2L57.4 10.6H63.2V16.8L61.4 18.6H55.6Z" fill="#e8eaec" stroke="#333" stroke-width="0.9"/><path d="M61.4 12.2H55.6M61.4 12.2L63.2 10.6M61.4 12.2V18.6" stroke="#333" stroke-width="0.7" fill="none"/><path d="M61.4 12.2L63.2 10.6V16.8L61.4 18.6Z" fill="#9aa0a8"/><rect x="68" y="10" width="1" height="10.5" fill="#8e8e8e"/><rect x="69" y="10" width="0.7" height="10.5" fill="#dadada"/><g fill="#2c2c2c"><path d="M80.8 7.2L78.3 10.2H83.3Z M80.8 21.6L78.3 18.6H83.3Z M73.3 14.4L76.3 11.9V16.9Z M88.4 14.4L85.4 11.9V16.9Z"/></g><path d="M80.8 9.5V19.3M75.5 14.4H86.2" stroke="#2c2c2c" stroke-width="1.3"/><rect x="79" y="12.6" width="3.6" height="3.6" fill="#f4f4f4" stroke="#2c2c2c" stroke-width="0.8"/><path d="M104.5 8.8A6.7 6.7 0 1 1 98.5 9.2" fill="none" stroke="#3c3c3c" stroke-width="1.3"/><path d="M99.5 6.2L104 8.8L99.5 11.2Z" fill="#2c2c2c"/><rect x="116.8" y="6.3" width="15.4" height="15.4" rx="1.5" fill="#b4d4ea" stroke="#7aaad0" stroke-width="1"/><rect x="117.4" y="13.9" width="7.4" height="7.4" fill="#ececec" stroke="#6a6a6a" stroke-width="1.2"/><path d="M125.8 12.8L129.6 9" stroke="#222" stroke-width="0.9"/><circle cx="129.7" cy="8.9" r="1.3" fill="#111"/><path d="M132.5 24.5L134.7 22.5L134.7 24.5Z" fill="#111"/><rect x="131.5" y="22.5" width="1" height="1" fill="#fff" opacity="0.7"/><defs><linearGradient id="pv" x1="0" x2="1"><stop offset="0" stop-color="#8a8e94"/><stop offset="1" stop-color="#dde0e4"/></linearGradient></defs><rect x="185" y="6.5" width="7.6" height="13.3" fill="url(#pv)" stroke="#555" stroke-width="0.9"/><rect x="193.8" y="6.5" width="6.6" height="8.3" fill="#f0f0f0" stroke="#777" stroke-width="0.9"/><path d="M188.6 16.5V21.5M186 19H191.2M197 11.5V16.2M194.6 13.9H199.4" stroke="#e01818" stroke-width="1.2"/><path d="M201 24.3L203.2 22.3L203.2 24.3Z" fill="#111"/><rect x="200" y="22.3" width="1" height="1" fill="#fff" opacity="0.7"/><rect x="205" y="10" width="1" height="10.5" fill="#8e8e8e"/><rect x="206" y="10" width="0.7" height="10.5" fill="#dadada"/><path d="M217.7 8.7V19.8M211.5 14.6L223.8 13.8" stroke="#333" stroke-width="1"/><circle cx="217.7" cy="8.8" r="1.9" fill="#5cbf5c" stroke="#2a6a2a" stroke-width="0.6"/><circle cx="211.5" cy="14.6" r="1.8" fill="#f6f6f6" stroke="#333" stroke-width="0.8"/><circle cx="223.8" cy="13.8" r="1.8" fill="#f6f6f6" stroke="#333" stroke-width="0.8"/><circle cx="217.7" cy="19.8" r="1.8" fill="#f6f6f6" stroke="#333" stroke-width="0.8"/><defs><linearGradient id="ky" x1="0" y1="0" x2="0" y2="1"><stop offset="0" stop-color="#fff"/><stop offset="0.6" stop-color="#f0f0f0"/><stop offset="1" stop-color="#8a8a8a"/></linearGradient></defs><rect x="229.3" y="5.3" width="20.3" height="19.5" fill="#efc24c"/><rect x="232.2" y="8.1" width="15.5" height="13.3" rx="2" fill="url(#ky)" stroke="#333" stroke-width="0.9"/><path d="M240.2 10.6L236.4 14L238.6 14V15.4H241.8V14L244 14Z" fill="#111"/><rect x="252.3" y="10" width="1" height="10.5" fill="#8e8e8e"/><rect x="253.3" y="10" width="0.7" height="10.5" fill="#dadada"/><text x="258" y="15.3" font-size="11" fill="#505050" font-family="Liberation Sans">3</text><path d="M266.8 21.4V17.2A2.6 2.6 0 0 1 272.4 17.2V21.4" fill="none" stroke="#d42020" stroke-width="2.2"/><rect x="265.7" y="19.6" width="2.2" height="1.9" fill="#f4f4f4"/><rect x="271.3" y="19.6" width="2.2" height="1.9" fill="#f4f4f4"/><path d="M272.8 24.3L275.0 22.3L275.0 24.3Z" fill="#111"/><rect x="271.8" y="22.3" width="1" height="1" fill="#fff" opacity="0.7"/><path d="M280.9 14.5L287.7 7.2M287.7 7.2Q292.5 10 293 19M286 20.1H294.6" stroke="#222" stroke-width="0.9" fill="none"/><path d="M291.5 16.5L293 19L294.3 16.5Z" fill="#222"/><path d="M279.40000000000003 21.4V17.2A2.6 2.6 0 0 1 285.0 17.2V21.4" fill="none" stroke="#d42020" stroke-width="2.2"/><rect x="278.3" y="19.6" width="2.2" height="1.9" fill="#f4f4f4"/><rect x="283.90000000000003" y="19.6" width="2.2" height="1.9" fill="#f4f4f4"/><text x="300" y="15.3" font-size="10.5" fill="#505050" font-family="Liberation Sans">%</text><path d="M310.0 21.4V17.2A2.6 2.6 0 0 1 315.59999999999997 17.2V21.4" fill="none" stroke="#d42020" stroke-width="2.2"/><rect x="308.9" y="19.6" width="2.2" height="1.9" fill="#f4f4f4"/><rect x="314.5" y="19.6" width="2.2" height="1.9" fill="#f4f4f4"/><rect x="321.6" y="6.8" width="7.3" height="12" rx="1" fill="#e4e4e4" stroke="#444" stroke-width="0.9"/><path d="M323.3 11.4L325.25 8.6L327.2 11.4Z M323.3 14.3L325.25 17.1L327.2 14.3Z" fill="#222"/><path d="M330.6 21.4V17.2A2.6 2.6 0 0 1 336.2 17.2V21.4" fill="none" stroke="#d42020" stroke-width="2.2"/><rect x="329.5" y="19.6" width="2.2" height="1.9" fill="#f4f4f4"/><rect x="335.1" y="19.6" width="2.2" height="1.9" fill="#f4f4f4"/><rect x="342" y="10" width="1" height="10.5" fill="#8e8e8e"/><rect x="343" y="10" width="0.7" height="10.5" fill="#dadada"/><path d="M350 6.5Q348.2 6.5 348.2 8.5V10.3Q348.2 12 346.9 12Q348.2 12 348.2 13.7V15.5Q348.2 17.5 350 17.5M353.6 6.5Q355.4 6.5 355.4 8.5V10.3Q355.4 12 356.7 12Q355.4 12 355.4 13.7V15.5Q355.4 17.5 353.6 17.5" fill="none" stroke="#6a6a6a" stroke-width="0.9"/><path d="M355 15.6L362.2 8.2" stroke="#b07818" stroke-width="3.2"/><path d="M355.2 15.4L361.6 8.8" stroke="#f2c830" stroke-width="2"/><path d="M361.4 8.9L363.3 7" stroke="#c06030" stroke-width="3"/><path d="M354.2 16.6L355.6 14.4" stroke="#fff" stroke-width="1.6"/><text x="347.8" y="21.8" font-size="3.6" font-weight="bold" fill="#444" font-family="Liberation Sans">ABC</text><rect x="448.5" y="10" width="1" height="10.5" fill="#8e8e8e"/><rect x="449.5" y="10" width="0.7" height="10.5" fill="#dadada"/><path d="M453.3 21.2V8.5L456 7L459.8 8.8V15.5L458 16.5V21.2Z" fill="#f0f0f0" stroke="#777" stroke-width="0.9"/><rect x="460.8" y="7" width="1.2" height="14.4" fill="#555"/><path d="M469.2 21.2V8.5L466.5 7L463 8.8V13.5L464.5 14.5V21.2Z" fill="#d4ecfc" stroke="#4e96d8" stroke-width="1.1"/><rect x="475.3" y="7.6" width="1" height="13.8" fill="#666"/><rect x="477.5" y="8.9" width="7" height="4.4" fill="#f0f0f0" stroke="#888" stroke-width="0.8"/><rect x="477.5" y="15.8" width="12.5" height="5" rx="0.6" fill="#a8b0b8" stroke="#555" stroke-width="0.8"/><path d="M490.5 24.3L492.7 22.3L492.7 24.3Z" fill="#111"/><rect x="489.5" y="22.3" width="1" height="1" fill="#fff" opacity="0.7"/><rect x="495.5" y="10" width="1" height="10.5" fill="#8e8e8e"/><rect x="496.5" y="10" width="0.7" height="10.5" fill="#dadada"/><path d="M501.2 11L505.5 7H512.5L508.2 11Z" fill="#f0f0f0" stroke="#666" stroke-width="0.8"/><path d="M501.2 14L505.5 10H512.5L508.2 14Z" fill="#e8e8e8" stroke="#666" stroke-width="0.8"/><path d="M501.2 17L505.5 13H510L508.2 17Z" fill="#e0e0e0" stroke="#666" stroke-width="0.8"/><rect x="509.5" y="12.6" width="6.8" height="8.8" fill="#f6f6f6" stroke="#555" stroke-width="0.8"/><rect x="510.8" y="14" width="3" height="3.6" fill="#1a56b4"/><path d="M510.8 19.2H515" stroke="#777" stroke-width="0.6"/><rect x="521.7" y="10" width="1" height="10.5" fill="#8e8e8e"/><rect x="522.7" y="10" width="0.7" height="10.5" fill="#dadada"/><rect x="523.9" y="5.3" width="20" height="19.5" fill="#efc24c"/><path d="M526.2 10V18.6H540.8V10Z" fill="#f2f2f2" stroke="#444" stroke-width="0.9"/><path d="M526.2 10V8.2H532L533.5 10" fill="#e0e0e0" stroke="#444" stroke-width="0.8"/><path d="M526.5 12H540.5" stroke="#999" stroke-width="0.8"/><circle cx="539.6" cy="17.2" r="2.7" fill="#f8c830" stroke="#e08a10" stroke-width="0.6"/><rect x="538.4" y="19.8" width="2.4" height="1.8" fill="#8a8a8a"/><rect x="547.6" y="6.8" width="15.4" height="14.2" fill="#f6f6f6" stroke="#4a4a4a" stroke-width="1.1"/><rect x="547.6" y="6.8" width="15.4" height="1.6" fill="#4a4a4a"/><path d="M550.3 9V19.5" stroke="#999" stroke-width="0.6"/><path d="M550.3 18.5H562" stroke="#aaa" stroke-width="0.5"/><path d="M551.5 17Q553.5 17 555 12Q556.5 7.8 558 12.5Q559.5 17.5 562.5 17" fill="none" stroke="#444" stroke-width="0.8"/><rect x="569.2" y="6.8" width="15" height="14.3" fill="#f6f6f6" stroke="#4a4a4a" stroke-width="1"/><rect x="569.2" y="10" width="15" height="1" fill="#777"/><rect x="569.7" y="16.8" width="14" height="3.8" fill="#9aa0a6"/><path d="M574.7 13.5H578.7L576.7 15.6Z" fill="#222"/><path d="M576.7 11.5V13.5" stroke="#222" stroke-width="0.9"/><rect x="589.4" y="10" width="1" height="10.5" fill="#8e8e8e"/><rect x="590.4" y="10" width="0.7" height="10.5" fill="#dadada"/><defs><radialGradient id="gl" cx="0.4" cy="0.35" r="0.7"><stop offset="0" stop-color="#ffffff"/><stop offset="0.6" stop-color="#c8d8ec"/><stop offset="1" stop-color="#7890b8"/></radialGradient></defs><circle cx="601" cy="11.8" r="6.6" fill="url(#gl)"/><path d="M594.6 11.8H607.4M601 5.2V18.4M596 7.5Q601 10 606 7.5M596 16Q601 13.5 606 16" stroke="#9ab0d0" stroke-width="0.5" fill="none"/><rect x="600.6" y="11.8" width="10.2" height="10.2" fill="#eef0f2" stroke="#555" stroke-width="0.9"/><rect x="600.6" y="11.8" width="10.2" height="1.6" fill="#6a7280"/><path d="M603 15.8H608.4M605.7 14V17.6M602.3 19.2H609" stroke="#333" stroke-width="0.8"/><path d="M611 24.4L613.2 22.4L613.2 24.4Z" fill="#111"/><rect x="610" y="22.4" width="1" height="1" fill="#fff" opacity="0.7"/><rect x="615.6" y="10" width="1" height="10.5" fill="#8e8e8e"/><rect x="616.6" y="10" width="0.7" height="10.5" fill="#dadada"/><g transform="translate(620.5 6.2) scale(0.95)"><path d="M11 4.6Q14.6 3.6 14.2 6.2Q13.8 8.4 10.8 8.6" fill="none" stroke="#3a3a3a" stroke-width="1"/><path d="M4.3 7.2L1.2 3.6L0.3 3.4L0.6 2.8L2.2 3.4L4.6 5" fill="#e6e6e6" stroke="#3a3a3a" stroke-width="0.8" stroke-linejoin="round"/><path d="M3.6 8.8Q2.8 3.6 7.6 3Q12.4 3.6 11.6 8.8Q11 9.8 7.6 9.8Q4.2 9.8 3.6 8.8Z" fill="#e6e6e6" stroke="#3a3a3a" stroke-width="0.9"/><path d="M4.2 5.2Q7.6 6 11 5.2" fill="none" stroke="#777" stroke-width="0.5"/><circle cx="7.6" cy="2.4" r="0.9" fill="#3a3a3a"/></g><rect x="628.7" y="13.8" width="6.8" height="7.6" fill="#f6f6f6" stroke="#555" stroke-width="0.8"/><rect x="629.9" y="15" width="2.8" height="3.2" fill="#1a56b4"/><path d="M629.8 19.8H634.4" stroke="#777" stroke-width="0.6"/><rect x="641.2" y="6.5" width="16.4" height="15" fill="#efefef" stroke="#4a4a4a" stroke-width="1"/><rect x="641.2" y="6.5" width="16.4" height="1.8" fill="#4a4a4a"/><g transform="translate(642.6 9.8) scale(0.95)"><path d="M11 4.6Q14.6 3.6 14.2 6.2Q13.8 8.4 10.8 8.6" fill="none" stroke="#3a3a3a" stroke-width="1"/><path d="M4.3 7.2L1.2 3.6L0.3 3.4L0.6 2.8L2.2 3.4L4.6 5" fill="#e6e6e6" stroke="#3a3a3a" stroke-width="0.8" stroke-linejoin="round"/><path d="M3.6 8.8Q2.8 3.6 7.6 3Q12.4 3.6 11.6 8.8Q11 9.8 7.6 9.8Q4.2 9.8 3.6 8.8Z" fill="#e6e6e6" stroke="#3a3a3a" stroke-width="0.9"/><path d="M4.2 5.2Q7.6 6 11 5.2" fill="none" stroke="#777" stroke-width="0.5"/><circle cx="7.6" cy="2.4" r="0.9" fill="#3a3a3a"/></g><g transform="translate(663.6 8.4) scale(1.02)"><path d="M11 4.6Q14.6 3.6 14.2 6.2Q13.8 8.4 10.8 8.6" fill="none" stroke="#3a3a3a" stroke-width="1"/><path d="M4.3 7.2L1.2 3.6L0.3 3.4L0.6 2.8L2.2 3.4L4.6 5" fill="#e6e6e6" stroke="#3a3a3a" stroke-width="0.8" stroke-linejoin="round"/><path d="M3.6 8.8Q2.8 3.6 7.6 3Q12.4 3.6 11.6 8.8Q11 9.8 7.6 9.8Q4.2 9.8 3.6 8.8Z" fill="#e6e6e6" stroke="#3a3a3a" stroke-width="0.9"/><path d="M4.2 5.2Q7.6 6 11 5.2" fill="none" stroke="#777" stroke-width="0.5"/><circle cx="7.6" cy="2.4" r="0.9" fill="#3a3a3a"/></g><path d="M679 24.4L681.2 22.4L681.2 24.4Z" fill="#111"/><rect x="678" y="22.4" width="1" height="1" fill="#fff" opacity="0.7"/></svg>
<div style="left:684px;top:2.5px;width:36px;height:25px;background:#bebebe;border-left:1px solid #a4a4a4"></div>
<div style="left:135px;top:5.2px;width:47px;height:13.3px;background:#e6e6e6;border-top:2px solid #555;border-left:2px solid #666;border-bottom:1px solid #f2f2f2;border-right:1px solid #f2f2f2"></div>
<div class="t" style="left:137.20px;top:4.68px;font-size:9px;line-height:14px;color:#202024;transform:scaleX(0.7754);transform-origin:0 0;">View</div>
<div style="left:171.5px;top:7.2px;width:10px;height:10.5px;background:#f2f2f2"></div>
<svg style="left:173.5px;top:10px" width="7" height="5"><path d="M0.8 0.8L3.5 3.6L6.2 0.8" stroke="#333" stroke-width="1.2" fill="none"/></svg>
<div style="left:365.8px;top:5.2px;width:80.5px;height:13.3px;background:#e4e4e4;border-top:2px solid #555;border-left:2px solid #666;border-bottom:1px solid #f2f2f2;border-right:1px solid #f2f2f2"></div>
<div class="t" style="left:370.00px;top:4.68px;font-size:9px;line-height:14px;color:#8a8a8a;transform:scaleX(0.7746);transform-origin:0 0;">Create Selection Se</div>
<div style="left:433.5px;top:7.2px;width:12px;height:10.5px;background:#fbfbfb"></div>
<svg style="left:436.5px;top:10px" width="7" height="5"><path d="M0.8 0.8L3.5 3.6L6.2 0.8" stroke="#333" stroke-width="1.2" fill="none"/></svg>
<div style="left:0px;top:397px;width:484px;height:11px;background:#c1c1c1"></div>
<div style="left:0px;top:408px;width:483px;height:1px;background:#ececec"></div>
<div style="left:0px;top:409px;width:483px;height:18px;background:#cbcbcb;border-top:1px solid #a8a8a8"></div>
<div style="left:0px;top:427px;width:484px;height:2px;background:#bababa"></div>
<div style="left:0px;top:429px;width:463px;height:1px;background:#8e8e8e"></div>
<svg style="left:0;top:0" width="484" height="430"><rect x="1.32" y="410" width="1" height="7" fill="#8a8a8a"/><rect x="7.03" y="410" width="1" height="7" fill="#8a8a8a"/><rect x="12.74" y="410" width="1" height="7" fill="#8a8a8a"/><rect x="18.45" y="410" width="1" height="7" fill="#8a8a8a"/><rect x="24.16" y="410" width="1" height="7" fill="#8a8a8a"/><rect x="29.87" y="410" width="1" height="7" fill="#8a8a8a"/><rect x="35.58" y="410" width="1" height="7" fill="#8a8a8a"/><rect x="41.29" y="410" width="1" height="7" fill="#8a8a8a"/><rect x="47.00" y="410" width="1" height="16" fill="#8a8a8a"/><rect x="52.71" y="410" width="1" height="7" fill="#8a8a8a"/><rect x="58.42" y="410" width="1" height="7" fill="#8a8a8a"/><rect x="64.13" y="410" width="1" height="7" fill="#8a8a8a"/><rect x="69.84" y="410" width="1" height="7" fill="#8a8a8a"/><rect x="75.55" y="410" width="1" height="7" fill="#8a8a8a"/><rect x="81.26" y="410" width="1" height="7" fill="#8a8a8a"/><rect x="86.97" y="410" width="1" height="7" fill="#8a8a8a"/><rect x="92.68" y="410" width="1" height="7" fill="#8a8a8a"/><rect x="98.39" y="410" width="1" height="7" fill="#8a8a8a"/><rect x="104.10" y="410" width="1" height="16" fill="#8a8a8a"/><rect x="109.81" y="410" width="1" height="7" fill="#8a8a8a"/><rect x="115.52" y="410" width="1" height="7" fill="#8a8a8a"/><rect x="121.23" y="410" width="1" height="7" fill="#8a8a8a"/><rect x="126.94" y="410" width="1" height="7" fill="#8a8a8a"/><rect x="132.65" y="410" width="1" height="7" fill="#8a8a8a"/><rect x="138.36" y="410" width="1" height="7" fill="#8a8a8a"/><rect x="144.07" y="410" width="1" height="7" fill="#8a8a8a"/><rect x="149.78" y="410" width="1" height="7" fill="#8a8a8a"/><rect x="155.49" y="410" width="1" height="7" fill="#8a8a8a"/><rect x="161.20" y="410" width="1" height="16" fill="#8a8a8a"/><rect x="166.91" y="410" width="1" height="7" fill="#8a8a8a"/><rect x="172.62" y="410" width="1" height="7" fill="#8a8a8a"/><rect x="178.33" y="410" width="1" height="7" fill="#8a8a8a"/><rect x="184.04" y="410" width="1" height="7" fill="#8a8a8a"/><rect x="189.75" y="410" width="1" height="7" fill="#8a8a8a"/><rect x="195.46" y="410" width="1" height="7" fill="#8a8a8a"/><rect x="201.17" y="410" width="1" height="7" fill="#8a8a8a"/><rect x="206.88" y="410" width="1" height="7" fill="#8a8a8a"/><rect x="212.59" y="410" width="1" height="7" fill="#8a8a8a"/><rect x="218.30" y="410" width="1" height="16" fill="#8a8a8a"/><rect x="224.01" y="410" width="1" height="7" fill="#8a8a8a"/><rect x="229.72" y="410" width="1" height="7" fill="#8a8a8a"/><rect x="235.43" y="410" width="1" height="7" fill="#8a8a8a"/><rect x="241.14" y="410" width="1" height="7" fill="#8a8a8a"/><rect x="246.85" y="410" width="1" height="7" fill="#8a8a8a"/><rect x="252.56" y="410" width="1" height="7" fill="#8a8a8a"/><rect x="258.27" y="410" width="1" height="7" fill="#8a8a8a"/><rect x="263.98" y="410" width="1" height="7" fill="#8a8a8a"/><rect x="269.69" y="410" width="1" height="7" fill="#8a8a8a"/><rect x="275.40" y="410" width="1" height="16" fill="#8a8a8a"/><rect x="281.11" y="410" width="1" height="7" fill="#8a8a8a"/><rect x="286.82" y="410" width="1" height="7" fill="#8a8a8a"/><rect x="292.53" y="410" width="1" height="7" fill="#8a8a8a"/><rect x="298.24" y="410" width="1" height="7" fill="#8a8a8a"/><rect x="303.95" y="410" width="1" height="7" fill="#8a8a8a"/><rect x="309.66" y="410" width="1" height="7" fill="#8a8a8a"/><rect x="315.37" y="410" width="1" height="7" fill="#8a8a8a"/><rect x="321.08" y="410" width="1" height="7" fill="#8a8a8a"/><rect x="326.79" y="410" width="1" height="7" fill="#8a8a8a"/><rect x="332.50" y="410" width="1" height="16" fill="#8a8a8a"/><rect x="338.21" y="410" width="1" height="7" fill="#8a8a8a"/><rect x="343.92" y="410" width="1" height="7" fill="#8a8a8a"/><rect x="349.63" y="410" width="1" height="7" fill="#8a8a8a"/><rect x="355.34" y="410" width="1" height="7" fill="#8a8a8a"/><rect x="361.05" y="410" width="1" height="7" fill="#8a8a8a"/><rect x="366.76" y="410" width="1" height="7" fill="#8a8a8a"/><rect x="372.47" y="410" width="1" height="7" fill="#8a8a8a"/><rect x="378.18" y="410" width="1" height="7" fill="#8a8a8a"/><rect x="383.89" y="410" width="1" height="7" fill="#8a8a8a"/><rect x="389.60" y="410" width="1" height="16" fill="#8a8a8a"/><rect x="395.31" y="410" width="1" height="7" fill="#8a8a8a"/><rect x="401.02" y="410" width="1" height="7" fill="#8a8a8a"/><rect x="406.73" y="410" width="1" height="7" fill="#8a8a8a"/><rect x="412.44" y="410" width="1" height="7" fill="#8a8a8a"/><rect x="418.15" y="410" width="1" height="7" fill="#8a8a8a"/><rect x="423.86" y="410" width="1" height="7" fill="#8a8a8a"/><rect x="429.57" y="410" width="1" height="7" fill="#8a8a8a"/><rect x="435.28" y="410" width="1" height="7" fill="#8a8a8a"/><rect x="440.99" y="410" width="1" height="7" fill="#8a8a8a"/><rect x="446.70" y="410" width="1" height="16" fill="#8a8a8a"/></svg>
<div class="t" style="left:43.40px;top:414.68px;font-size:9px;line-height:14px;color:#202024;transform:scaleX(0.8192);transform-origin:0 0;">30</div>
<div class="t" style="left:100.50px;top:414.68px;font-size:9px;line-height:14px;color:#202024;transform:scaleX(0.8192);transform-origin:0 0;">40</div>
<div class="t" style="left:157.60px;top:414.68px;font-size:9px;line-height:14px;color:#202024;transform:scaleX(0.8192);transform-origin:0 0;">50</div>
<div class="t" style="left:214.70px;top:414.68px;font-size:9px;line-height:14px;color:#202024;transform:scaleX(0.8192);transform-origin:0 0;">60</div>
<div class="t" style="left:271.80px;top:414.68px;font-size:9px;line-height:14px;color:#202024;transform:scaleX(0.8192);transform-origin:0 0;">70</div>
<div class="t" style="left:328.90px;top:414.68px;font-size:9px;line-height:14px;color:#202024;transform:scaleX(0.8192);transform-origin:0 0;">80</div>
<div class="t" style="left:386.00px;top:414.68px;font-size:9px;line-height:14px;color:#202024;transform:scaleX(0.8192);transform-origin:0 0;">90</div>
<div class="t" style="left:441.45px;top:414.68px;font-size:9px;line-height:14px;color:#202024;transform:scaleX(0.7659);transform-origin:0 0;">100</div>
<div style="left:0px;top:430px;width:463px;height:14px;background:#bfbfbf"></div>
<div style="left:0px;top:429px;width:144.5px;height:14px;background:#bdbdbd;border-top:1px solid #9a9a9a;border-right:1px solid #e2e2e2;border-bottom:1px solid #e2e2e2"></div>
<div style="left:0px;top:443px;width:463px;height:3px;background:#c8c8c8"></div>
<div style="left:0px;top:446px;width:348px;height:1px;background:#8e8e8e"></div>
<div style="left:0px;top:447px;width:348px;height:13px;background:#c0c0c0"></div>
<div class="t" style="left:-3.00px;top:445.48px;font-size:9px;line-height:14px;color:#161618;transform:scaleX(0.9694);transform-origin:0 0;">ects</div>
<svg style="left:145px;top:426px" width="55" height="18"><path d="M8.5 4.2A3.6 3.6 0 0 1 12.1 7.8Q12.1 10 10.3 12V13.5H6.7V12Q4.9 10 4.9 7.8A3.6 3.6 0 0 1 8.5 4.2Z" fill="#e48a9a" stroke="#555" stroke-width="0.8"/><rect x="6.9" y="13.2" width="3.2" height="1.3" fill="#888"/><circle cx="7.5" cy="6.8" r="1" fill="#fff" opacity="0.7"/><path d="M24 9V7.3A2 2 0 0 1 28 7.3V9" fill="none" stroke="#777" stroke-width="1.3"/><rect x="22.2" y="9" width="7.4" height="5.5" fill="#eadab4" stroke="#666" stroke-width="0.8"/><rect x="25.5" y="10.8" width="1" height="2" fill="#886"/><rect x="39.2" y="4.6" width="9.8" height="9.8" fill="#f2f2f2" stroke="#444" stroke-width="0.9"/><circle cx="44.1" cy="9.5" r="2.6" fill="#f8f8f8" stroke="#555" stroke-width="0.8"/><path d="M39.5 9.5H41.5M46.7 9.5H48.7M44.1 4.8V6.9M44.1 12.1V14.2" stroke="#555" stroke-width="0.7"/></svg>
<div class="t" style="left:199.90px;top:428.68px;font-size:9px;line-height:14px;color:#161618;transform:scaleX(0.7409);transform-origin:0 0;">X:</div>
<div style="left:206.7px;top:429px;width:39px;height:14px;background:#e4e4e4;border-top:2px solid #404040;border-left:2px solid #4a4a4a;border-bottom:1px solid #ececec;border-right:1px solid #ececec"></div>
<div class="t" style="left:208.90px;top:428.88px;font-size:9px;line-height:14px;color:#8a8a8a;transform:scaleX(0.8584);transform-origin:0 0;">-34,155</div>
<div class="t" style="left:254.40px;top:428.68px;font-size:9px;line-height:14px;color:#161618;transform:scaleX(0.8367);transform-origin:0 0;">Y:</div>
<div style="left:262.2px;top:429px;width:38px;height:14px;background:#e4e4e4;border-top:2px solid #404040;border-left:2px solid #4a4a4a;border-bottom:1px solid #ececec;border-right:1px solid #ececec"></div>
<div class="t" style="left:264.40px;top:428.88px;font-size:9px;line-height:14px;color:#8a8a8a;transform:scaleX(0.8703);transform-origin:0 0;">3,484</div>
<div class="t" style="left:310.00px;top:428.68px;font-size:9px;line-height:14px;color:#161618;transform:scaleX(0.8378);transform-origin:0 0;">Z:</div>
<div style="left:317.3px;top:429px;width:38.3px;height:14px;background:#e4e4e4;border-top:2px solid #404040;border-left:2px solid #4a4a4a;border-bottom:1px solid #ececec;border-right:1px solid #ececec"></div>
<div class="t" style="left:318.90px;top:428.88px;font-size:9px;line-height:14px;color:#8a8a8a;transform:scaleX(0.8873);transform-origin:0 0;">0,0</div>
<div style="left:365.3px;top:429px;width:67.2px;height:14px;background:#bfbfbf;border-top:1px solid #8e8e8e;border-left:1px solid #8e8e8e;border-bottom:1px solid #e2e2e2;border-right:1px solid #e2e2e2"></div>
<div class="t" style="left:368.90px;top:428.88px;font-size:9px;line-height:14px;color:#161618;transform:scaleX(0.8264);transform-origin:0 0;">Grid = 10,0</div>
<div style="left:348px;top:445px;width:1px;height:15px;background:#9a9a9a"></div>
<div style="left:349px;top:445px;width:1px;height:15px;background:#e4e4e4"></div>
<div style="left:350px;top:446px;width:13px;height:13px;background:#efc24c"></div>
<svg style="left:350px;top:446px" width="13" height="13"><path d="M3 4.5L5 2.5H11V9L9 11H3Z" fill="#f2f2f2" stroke="#444" stroke-width="0.8"/><path d="M3 4.5H9V11M9 4.5L11 2.5" fill="none" stroke="#444" stroke-width="0.7"/></svg>
<div style="left:365.3px;top:446px;width:67.2px;height:14px;background:#bfbfbf;border-top:1px solid #8e8e8e;border-left:1px solid #8e8e8e;border-bottom:1px solid #e2e2e2;border-right:1px solid #e2e2e2"></div>
<div class="t" style="left:368.90px;top:445.38px;font-size:9px;line-height:14px;color:#161618;transform:scaleX(0.7984);transform-origin:0 0;">Add Time Tag</div>
<div style="left:434.8px;top:428px;width:29px;height:30px;background:#bebebe;border-top:1px solid #dadada;border-left:1px solid #dadada;border-bottom:1px solid #848484;border-right:1px solid #848484;border-radius:1px"></div>
<svg style="left:440px;top:438px" width="18" height="10"><circle cx="4" cy="4.6" r="2.9" fill="none" stroke="#111" stroke-width="1.6"/><path d="M6.8 4.6H16.6M13 4.6V7.3M15.5 4.6V6.8" stroke="#111" stroke-width="1.6"/></svg>
<div style="left:463px;top:426px;width:257px;height:34px;background:#c0c0c0"></div>
<div style="left:484px;top:422px;width:236px;height:3px;background:#bdbdbd;border-top:1px solid #dadada"></div>
<div style="left:484px;top:425px;width:236px;height:1px;background:#9a9a9a"></div>
<div style="left:463.5px;top:427px;width:1px;height:33px;background:#9a9a9a"></div>
<div style="left:464.5px;top:427px;width:1px;height:33px;background:#e2e2e2"></div>
<div style="left:466.8px;top:428.7px;width:31.5px;height:14.5px;background:#bebebe;border-top:1px solid #dadada;border-left:1px solid #dadada;border-bottom:1px solid #848484;border-right:1px solid #848484;border-radius:1px"></div>
<div class="t" style="left:468.30px;top:428.83px;font-size:9px;line-height:14px;color:#161618;transform:scaleX(0.7804);transform-origin:0 0;">Auto Key</div>
<div style="left:466.8px;top:444.3px;width:31.5px;height:14px;background:#bebebe;border-top:1px solid #dadada;border-left:1px solid #dadada;border-bottom:1px solid #848484;border-right:1px solid #848484;border-radius:1px"></div>
<div class="t" style="left:470.05px;top:444.18px;font-size:9px;line-height:14px;color:#161618;transform:scaleX(0.7932);transform-origin:0 0;">Set Key</div>
<div style="left:500.9px;top:428.7px;width:77px;height:14px;background:#e6e6e6;border-top:2px solid #7a7a7a;border-left:2px solid #7a7a7a;border-bottom:1px solid #f5f5f5;border-right:1px solid #f5f5f5"></div>
<div class="t" style="left:502.50px;top:428.48px;font-size:9px;line-height:14px;color:#161618;transform:scaleX(0.7995);transform-origin:0 0;">Selected</div>
<div style="left:566px;top:430.7px;width:10.8px;height:11px;background:#f8f8f8"></div>
<svg style="left:568px;top:433.5px" width="7" height="5"><path d="M0.8 0.8L3.5 3.6L6.2 0.8" stroke="#333" stroke-width="1.2" fill="none"/></svg>
<svg style="left:501px;top:444px" width="16" height="15"><path d="M6 2.5H12.5M6 2.5V11M12 2.5V6" stroke="#6a6ad8" stroke-width="0.7" fill="none"/><path d="M1.8 3.5Q3.5 8 4.6 10.8Q5.2 11.8 6 10Q7.5 5 9 3Q10 2 10.8 3.6L11.8 6.5" fill="none" stroke="#d02020" stroke-width="1.1"/><path d="M12.5 13.5L14.7 11.3V13.5Z" fill="#111"/></svg>
<div style="left:518.4px;top:444.3px;width:59.3px;height:14px;background:#bebebe;border-top:1px solid #dadada;border-left:1px solid #dadada;border-bottom:1px solid #848484;border-right:1px solid #848484;border-radius:1px"></div>
<div class="t" style="left:527.55px;top:444.18px;font-size:9px;line-height:14px;color:#161618;transform:scaleX(0.8199);transform-origin:0 0;">Key Filters...</div>
<svg style="left:578px;top:426px" width="142" height="34"><g fill="#2e2e2e"><rect x="6" y="6.2" width="1.8" height="6.4"/><path d="M11.5 6.2V12.6L7.8 9.4Z M16.4 6.2V12.6L12.2 9.4Z"/><path d="M23.3 6.2V12.6L27.5 9.4Z" transform="matrix(-1 0 0 1 50.6 0)"/><path d="M23.3 9.4L27.5 6.2V12.6Z"/><rect x="28.5" y="6.2" width="1.8" height="6.4"/><rect x="31.4" y="6.2" width="1.8" height="6.4"/><path d="M40.5 6.2V12.6L46.8 9.4Z"/><rect x="53.5" y="6.2" width="1.8" height="6.4"/><rect x="56.4" y="6.2" width="1.8" height="6.4"/><path d="M58.8 6.2V12.6L64.5 9.4Z"/><path d="M71.3 6.2V12.6L75.7 9.4Z M76 6.2V12.6L80.4 9.4Z"/><rect x="80.5" y="6.2" width="1.8" height="6.4"/><path d="M6.5 21.5V27.2M16.5 21.5V27.2" stroke="#333" stroke-width="1.1"/><path d="M7.5 24.3L11 21.8V26.8Z M15.5 24.3L12 21.8V26.8Z"/></g><path d="M49.5 15.5L51.7 13.3V15.5Z" fill="#111"/><rect x="19.8" y="4" width="0.8" height="10" fill="#999"/><rect x="68.5" y="4" width="0.8" height="10" fill="#999"/></svg>
<div style="left:599.4px;top:444px;width:42.5px;height:13.3px;background:#e2e2e2;border-top:2px solid #404040;border-left:2px solid #4a4a4a;border-bottom:1px solid #ececec;border-right:1px solid #ececec"></div>
<div class="t" style="left:601.50px;top:444.08px;font-size:9px;line-height:14px;color:#4a4aa0;transform:scaleX(0.8991);transform-origin:0 0;">0</div>
<svg style="left:642.5px;top:444.5px" width="7" height="12"><rect x="0.5" y="0.5" width="6" height="11" fill="#c8c8c8" stroke="#8a8a8a" stroke-width="0.8"/><path d="M1.8 4.8L3.5 2L5.2 4.8Z M1.8 7.2L3.5 10L5.2 7.2Z" fill="#111"/></svg>
<svg style="left:650px;top:426px" width="70" height="34"><circle cx="20.2" cy="8.2" r="3.1" fill="#e8eef2" stroke="#555" stroke-width="1.1"/><path d="M22.5 10.5L25.2 13.4" stroke="#333" stroke-width="1.8"/><path d="M25.5 4H28.5M27 2.6V5.4M25.5 6.8H28.5" stroke="#666" stroke-width="0.7"/><rect x="33.3" y="5" width="4" height="4" fill="#f4f4f4" stroke="#666" stroke-width="0.8"/><rect x="38" y="5" width="4" height="4" fill="#f4f4f4" stroke="#666" stroke-width="0.8"/><rect x="33.3" y="9.7" width="4" height="4" fill="#f4f4f4" stroke="#666" stroke-width="0.8"/><circle cx="40.2" cy="11.5" r="2.2" fill="#eee" stroke="#555" stroke-width="0.8"/><path d="M41.8 13.2L43 14.5" stroke="#333" stroke-width="1.2"/><path d="M48.5 6L50 4.5M57.5 4.5L59 6M48.5 15L50 16.5M57.5 16.5L59 15" stroke="#555" stroke-width="0.8"/><path d="M50.5 7.5L52 6H57.5V12.5L56 14H50.5Z" fill="#5aa04a" stroke="#2a5a22" stroke-width="0.8"/><path d="M50.5 7.5H56V14M56 7.5L57.5 6" stroke="#2a5a22" stroke-width="0.6" fill="none"/><rect x="64" y="5" width="6" height="5" fill="#f4f4f4" stroke="#666" stroke-width="0.8"/><path d="M63 10.5L64.5 9H70V16H63Z" fill="#5aa04a" stroke="#2a5a22" stroke-width="0.8"/><rect x="4.5" y="19.5" width="8" height="9.5" fill="#f2f2f2" stroke="#555" stroke-width="0.8"/><rect x="5.3" y="20.3" width="3.5" height="3.8" fill="#3a6ab0"/><rect x="8.5" y="24.5" width="5" height="4.8" fill="#e4e4e4" stroke="#555" stroke-width="0.7"/><path d="M17.5 20.5L27 24.8L17.5 29" fill="none" stroke="#7a7a7a" stroke-width="0.9"/><path d="M22 22.5Q23.5 24.8 22 27" fill="none" stroke="#999" stroke-width="0.6"/><path d="M26.5 30L28.7 27.8V30Z" fill="#111"/><path d="M35 24Q34 21 36 21V19.5Q37.5 18.5 38.5 20Q40 18.5 41 20Q42.5 19.5 42.5 21V26Q42 29.5 38.5 29.5Q35.5 29.5 35 26Z" fill="#f4f4f4" stroke="#444" stroke-width="0.8"/><path d="M41.5 30L43.7 27.8V30Z" fill="#111"/><path d="M51 27Q52 21.5 56.5 22" fill="none" stroke="#333" stroke-width="1.1"/><path d="M52.5 23.5L55 20.5L58 24.5Z" fill="#5ab04a" stroke="#2a5a22" stroke-width="0.6"/><circle cx="50.5" cy="28.2" r="1.3" fill="#111"/><path d="M56.5 30L58.7 27.8V30Z" fill="#111"/><rect x="64" y="19.5" width="8" height="9" fill="#f4f4f4" stroke="#444" stroke-width="0.9"/><path d="M65.5 21.5L69 25" stroke="#111" stroke-width="1.2"/></svg>
</body></html>
